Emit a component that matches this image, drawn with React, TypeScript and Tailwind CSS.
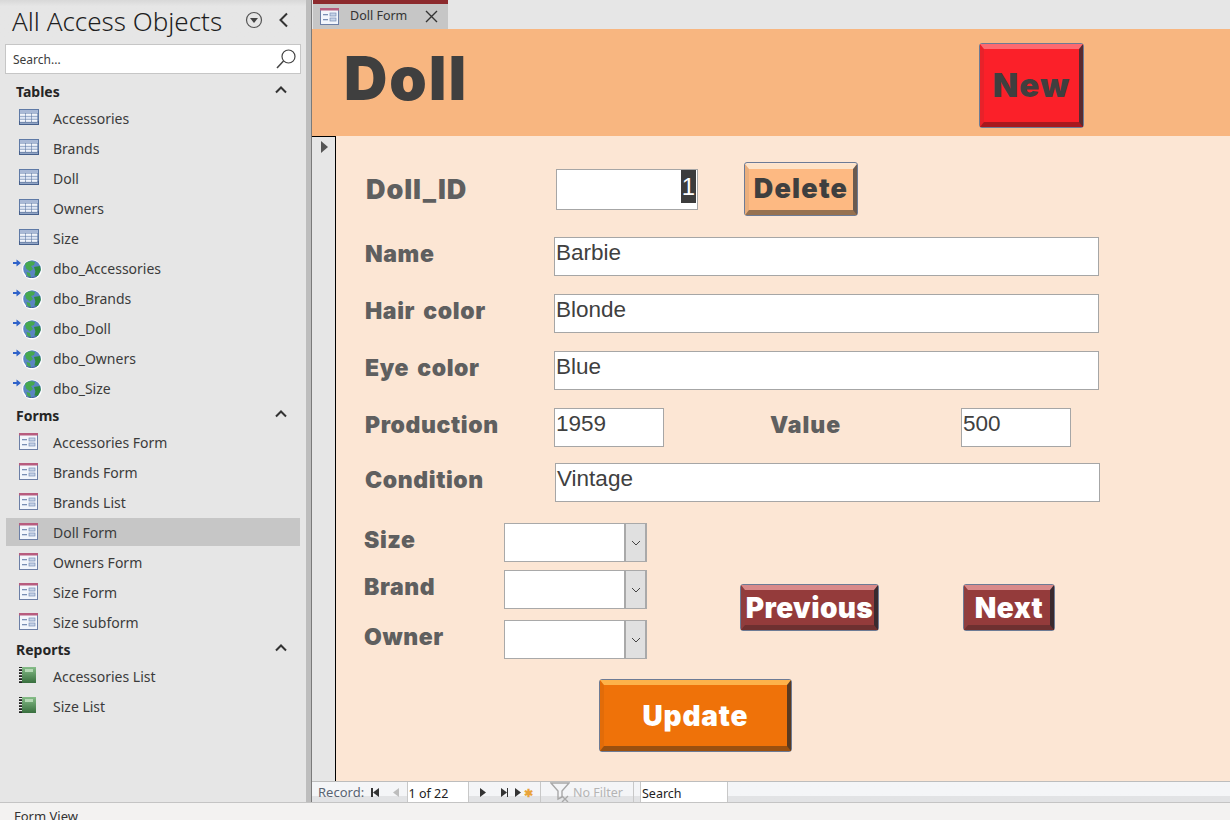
import React from "react";

const sans = "font-['Noto_Sans','Open_Sans',sans-serif]";
const arial = "font-['Liberation_Sans',Arial,sans-serif]";
const black = "font-['Inter','Liberation_Sans',sans-serif] font-black";

function TableIcon() {
  return (
    <svg width="20" height="16" viewBox="0 0 20 16" className="block">
      <rect x="0" y="0" width="20" height="16" fill="#5f7aa6" />
      <rect x="0" y="12" width="20" height="4" fill="#46608c" />
      <rect x="1" y="1" width="18" height="3" fill="#a9b9d6" />
      {[1, 7, 13].map((x) =>
        [4.5, 7.5, 10.5].map((y) => <rect key={`${x}-${y}`} x={x} y={y} width="5.4" height="2.4" fill={y === 7.5 ? "#dfe7f5" : "#f2f5fb"} />)
      )}
      <rect x="1" y="13.4" width="18" height="1.6" fill="#93a6c6" />
    </svg>
  );
}

function GlobeIcon() {
  return (
    <svg width="30" height="21" viewBox="0 0 30 21" className="block">
      <circle cx="19" cy="10.5" r="10" fill="#fff" />
      <circle cx="19" cy="10" r="8.8" fill="#5b86c2" />
      <path d="M12 5c2-3 6-3.4 10-2l-1 3-3 1 2 3-3 2.5-4-3z" fill="#46a84f" />
      <path d="M21 8l6-1 .8 4-3 6-3.4-.6 1-4z" fill="#2f8a3e" />
      <path d="M13.5 13l3.5 1 1 4.5-3.5-1.5z" fill="#46a84f" />
      <path d="M13 17c3 2 8 2 11 0" stroke="#3a5f98" strokeWidth="1" fill="none" />
      <path d="M0 3h3.5V.5L8 4 3.5 7.5V5H0z" fill="#2f62c9" />
    </svg>
  );
}

function FormIcon() {
  return (
    <svg width="19" height="17" viewBox="0 0 19 17" className="block">
      <rect x="0.5" y="0.5" width="18" height="16" fill="#f3f6fc" stroke="#6c7fa6" />
      <rect x="0" y="0" width="19" height="2.5" fill="#b85c7e" />
      <rect x="3" y="6" width="5" height="1.3" fill="#7a8fb5" />
      <rect x="10" y="5" width="6" height="3" fill="#c7d3e8" stroke="#7a8fb5" strokeWidth="0.7" />
      <rect x="3" y="11" width="5" height="1.3" fill="#7a8fb5" />
      <rect x="10" y="10" width="6" height="3" fill="#c7d3e8" stroke="#7a8fb5" strokeWidth="0.7" />
    </svg>
  );
}

function ReportIcon() {
  return (
    <svg width="17" height="16" viewBox="0 0 17 16" className="block">
      <defs>
        <linearGradient id="rp" x1="0" y1="0" x2="0" y2="1">
          <stop offset="0" stopColor="#86bd88" />
          <stop offset="1" stopColor="#386f3e" />
        </linearGradient>
      </defs>
      <rect x="2" y="0" width="15" height="16" fill="url(#rp)" />
      <rect x="6" y="2" width="8" height="3" fill="#b4d8b4" />
      <rect x="0" y="0" width="3" height="16" fill="#222" />
      {[1, 4, 7, 10, 13].map((y) => (
        <rect key={y} x="0" y={y} width="3" height="1.2" fill="#eee" />
      ))}
    </svg>
  );
}

function Caret() {
  return (
    <svg width="12" height="8" viewBox="0 0 12 8" className="block">
      <path d="M1 6.5L6 1.5l5 5" stroke="#333" strokeWidth="2" fill="none" />
    </svg>
  );
}

function Section({ title, mt }: { title: string; mt?: string }) {
  return (
    <div className={`flex items-center justify-between h-[24px] pl-[16px] pr-[19px] ${mt ?? ""}`}>
      <span className="text-[14px] font-bold text-[#252525]">{title}</span>
      <span className="-mt-[3px]"><Caret /></span>
    </div>
  );
}

function Item({ label, icon, selected }: { label: string; icon: React.ReactNode; selected?: boolean }) {
  return (
    <div className="relative flex items-center h-[30px] mx-[6px] pl-[47px]">
      {selected && <div className="absolute left-0 right-0 top-[1px] h-[28px] bg-[#c6c6c6]" />}
      <span className="absolute left-[13px] top-[6px]">{icon}</span>
      <span className="relative text-[14px] text-[#3b3b3b]">{label}</span>
    </div>
  );
}

function Sidebar() {
  const tables = ["Accessories", "Brands", "Doll", "Owners", "Size"];
  const links = ["dbo_Accessories", "dbo_Brands", "dbo_Doll", "dbo_Owners", "dbo_Size"];
  const forms = ["Accessories Form", "Brands Form", "Brands List", "Doll Form", "Owners Form", "Size Form", "Size subform"];
  const reports = ["Accessories List", "Size List"];
  return (
    <aside className={`w-[306px] shrink-0 bg-[#e6e6e6] flex flex-col ${sans}`}>
      <div className="flex items-center h-[44px] pl-[12px] pr-[17px] bg-gradient-to-b from-[#d8d8d8] from-0% to-[#e6e6e6] to-[14%]">
        <span className="text-[26px] leading-none text-[#1f1f1f] font-light flex-1 whitespace-nowrap -mt-[2px]">All Access Objects</span>
        <svg width="18" height="18" viewBox="0 0 18 18" className="mr-[15px] -mt-[5px]">
          <circle cx="9" cy="9" r="7.5" stroke="#555" strokeWidth="1.2" fill="none" />
          <path d="M5 7h8l-4 5z" fill="#444" />
        </svg>
        <svg width="11" height="16" viewBox="0 0 11 16" className="-mt-[5px]">
          <path d="M9 1.5L2.5 8 9 14.5" stroke="#333" strokeWidth="2" fill="none" />
        </svg>
      </div>
      <div className="flex items-center justify-between ml-[5px] w-[296px] h-[30px] bg-white border border-[#c6c6c6] pl-[7px] pr-[3px]">
        <span className="text-[12px] text-[#3b3b3b] mt-[1px]">Search...</span>
        <svg width="22" height="22" viewBox="0 0 22 22">
          <circle cx="13.5" cy="8.5" r="6.5" stroke="#444" strokeWidth="1.2" fill="none" />
          <path d="M8.5 13L2 20" stroke="#444" strokeWidth="1.5" />
        </svg>
      </div>
      <Section title="Tables" mt="mt-[5px]" />
      {tables.map((t) => <Item key={t} label={t} icon={<TableIcon />} />)}
      {links.map((t) => (
        <div key={t} className="relative flex items-center h-[30px] mx-[6px] pl-[47px]">
          <span className="absolute left-[7px] top-[6px]"><GlobeIcon /></span>
          <span className="text-[14px] text-[#3b3b3b]">{t}</span>
        </div>
      ))}
      <Section title="Forms" />
      {forms.map((t) => <Item key={t} label={t} icon={<FormIcon />} selected={t === "Doll Form"} />)}
      <Section title="Reports" />
      {reports.map((t) => <Item key={t} label={t} icon={<ReportIcon />} />)}
    </aside>
  );
}

function Bevel({
  children, tone, className,
}: { children: React.ReactNode; tone: "red" | "peach" | "maroon" | "orange"; className: string }) {
  const tones = {
    red: "bg-[#fb2029] border-t-[#fd6a70] border-r-[#5a2a2e] border-b-[#a8181e] border-l-[#e8222a] text-[#3f3f3f]",
    peach: "bg-[#fdb982] border-t-[#fee3c8] border-r-[#6a5a50] border-b-[#96714f] border-l-[#eaae7c] text-[#3f3f3f]",
    maroon: "bg-[#943b3b] border-t-[#d98a8a] border-r-[#3a2a2e] border-b-[#6e3030] border-l-[#8f3e3e] text-white",
    orange: "bg-[#ef7209] border-t-[#fdb24a] border-r-[#5a3a20] border-b-[#9a5010] border-l-[#e26c09] text-white",
  };
  return (
    <div className={`rounded-[3px] border border-[#6d7b95] ${className}`}>
      <div className={`h-full w-full flex items-center justify-center border-t-[5px] border-r-[4px] border-b-[5px] border-l-[4px] ${tones[tone]} ${black}`}>
        {children}
      </div>
    </div>
  );
}

function Label({ children, w, className = "" }: { children: React.ReactNode; w: string; className?: string }) {
  return (
    <span className={`${black} text-[23px] tracking-[0.6px] [word-spacing:3px] leading-[30px] text-[#5f5f5f] whitespace-nowrap -translate-y-[3px] ${w} ${className}`}>{children}</span>
  );
}

function Field({ value, w, className = "" }: { value?: string; w: string; className?: string }) {
  return (
    <div className={`h-[39px] bg-white border border-[#a6a6a6] pl-[1px] ${arial} text-[22.5px] leading-[29px] text-[#404040] ${w} ${className}`}>
      {value}
    </div>
  );
}

function Combo() {
  return (
    <div className="flex h-[39px] w-[143px] bg-white border-2 border-[#a9a9a9] border-y border-l">
      <div className="flex-1" />
      <div className="w-[21px] bg-[#e0e0e0] border-l-2 border-[#a9a9a9] flex items-center justify-center">
        <svg width="10" height="6" viewBox="0 0 10 6"><path d="M1 1l4 4 4-4" stroke="#444" strokeWidth="1" fill="none" /></svg>
      </div>
    </div>
  );
}

function Tri({ dir = "r", color = "#333" }: { dir?: "r" | "l"; color?: string }) {
  return (
    <svg width="6" height="9" viewBox="0 0 6 9" className="block">
      <path d={dir === "r" ? "M0 0l6 4.5L0 9z" : "M6 0L0 4.5 6 9z"} fill={color} />
    </svg>
  );
}

function RecordBar() {
  return (
    <div className="h-[21px] shrink-0 border-t border-[#bdbdbd] flex bg-gradient-to-b from-[#f4f5f7] from-70% to-[#e2e3e5] to-70%">
      <div className={`flex items-center w-[229px] border-r border-[#c8c8c8] ${sans}`}>
        <span className="ml-[6px] text-[13px] text-[#5a6472] w-[53px] mt-[2px]">Record:</span>
        <span className="w-[1.5px] h-[9px] bg-[#333]" />
        <Tri dir="l" />
        <span className="ml-[14px]"><Tri dir="l" color="#bdbdbd" /></span>
        <div className="ml-[8px] w-[62px] h-[20px] bg-white border-x border-[#c8c8c8] pl-[1px] text-[12.5px] leading-[23px] text-[#222]">1 of 22</div>
        <span className="ml-[11px]"><Tri /></span>
        <span className="ml-[15px]"><Tri /></span>
        <span className="w-[1.5px] h-[9px] bg-[#333]" />
        <span className="ml-[7px]"><Tri /></span>
        <span className="ml-[3px] text-[#e9a33a] text-[11px] leading-none font-bold">✱</span>
      </div>
      <div className={`flex items-center w-[93px] border-r border-[#c8c8c8] pl-[9px] ${sans}`}>
        <svg width="20" height="21" viewBox="0 0 20 21" className="shrink-0">
          <path d="M1 1h18l-7 8v6l-4 2V9z" stroke="#a8a8a8" strokeWidth="1.4" fill="none" />
          <path d="M12 14l6 6M18 14l-6 6" stroke="#a8a8a8" strokeWidth="1.4" />
        </svg>
        <span className="ml-[3px] text-[12.5px] text-[#b4b4b4] whitespace-nowrap mt-[2px]">No Filter</span>
      </div>
      <div className={`ml-[6px] w-[88px] h-[20px] bg-white border-x border-[#c8c8c8] pl-[1px] text-[12.5px] leading-[23px] text-[#222] ${sans}`}>Search</div>
    </div>
  );
}

export default function App() {
  return (
    <div className="w-[1230px] h-[820px] overflow-hidden flex flex-col bg-[#e6e6e6]">
      <div className="flex flex-1 min-h-0">
        <Sidebar />
        <div className="w-[5px] bg-[#bdbdbd] shrink-0" />
        <div className="w-[1px] bg-[#7a7a7a] shrink-0" />
        <main className="flex-1 min-w-0 flex flex-col">
          <div className={`h-[29px] shrink-0 bg-[#e6e6e6] ${sans}`}>
            <div className="w-[135px] h-full ml-[1px] bg-[#c6c6c6] border-t-[4px] border-[#8c2a2d] flex items-center pl-[7px]">
              <FormIcon />
              <span className="ml-[11px] text-[12.5px] text-[#333]">Doll Form</span>
              <svg width="13" height="13" viewBox="0 0 13 13" className="ml-[18px]">
                <path d="M1 1l11 11M12 1L1 12" stroke="#333" strokeWidth="1.4" />
              </svg>
            </div>
          </div>
          <header className="h-[107px] shrink-0 bg-[#f8b680] flex pl-[32px] pr-[146px] items-start justify-between">
            <h1 className={`${black} text-[60px] tracking-[2px] leading-none text-[#3f3f3f] mt-[19px]`}>Doll</h1>
            <Bevel tone="red" className="w-[105px] h-[85px] mt-[14px] text-[33px] tracking-[1.2px]">New</Bevel>
          </header>
          <div className="flex-1 min-h-0 flex">
            <div className="w-[24px] shrink-0 bg-[#e6e6e6] border-t border-r border-black pl-[9px] pt-[4px]">
              <svg width="7" height="12" viewBox="0 0 7 12"><path d="M0 0l7 6-7 6z" fill="#555" /></svg>
            </div>
            <div className="flex-1 bg-[#fce6d4] pl-[29px] pt-[26px]">
              <div className="flex items-center h-[54px]">
                <Label w="w-[190px]" className="ml-[1px] text-[27px] tracking-[0.9px] translate-y-[1px]">Doll_ID</Label>
                <div className={`relative h-[41px] w-[142px] bg-white border border-[#a6a6a6] ${arial}`}>
                  <span className="absolute right-[1px] top-0 h-[33px] w-[15px] bg-[#3c3c3c] text-white text-[24px] leading-[33px] text-center">1</span>
                </div>
                <Bevel tone="peach" className="w-[114px] h-[54px] ml-[46px] pt-[1px] text-[27px] tracking-[1.2px]">Delete</Bevel>
              </div>
              <div className="flex items-center mt-[21px]">
                <Label w="w-[189px]">Name</Label>
                <Field value="Barbie" w="w-[545px]" />
              </div>
              <div className="flex items-center mt-[18px]">
                <Label w="w-[189px]">Hair color</Label>
                <Field value="Blonde" w="w-[545px]" />
              </div>
              <div className="flex items-center mt-[18px]">
                <Label w="w-[189px]">Eye color</Label>
                <Field value="Blue" w="w-[545px]" />
              </div>
              <div className="flex items-center mt-[18px]">
                <Label w="w-[189px]">Production</Label>
                <Field value="1959" w="w-[110px]" />
                <Label w="w-[191px]" className="ml-[106px] tracking-[1px]">Value</Label>
                <Field value="500" w="w-[110px]" />
              </div>
              <div className="flex items-center mt-[16px]">
                <Label w="w-[190px]">Condition</Label>
                <Field value="Vintage" w="w-[545px]" />
              </div>
              <div className="flex mt-[21px] -ml-[1px]">
                <div className="flex flex-col w-[283px]">
                  <div className="flex items-center"><Label w="w-[140px]">Size</Label><Combo /></div>
                  <div className="flex items-center mt-[8px]"><Label w="w-[140px]">Brand</Label><Combo /></div>
                  <div className="flex items-center mt-[11px]"><Label w="w-[140px]">Owner</Label><Combo /></div>
                </div>
                <Bevel tone="maroon" className="w-[139px] h-[47px] ml-[93px] mt-[61px] text-[28px] tracking-[0.4px]">Previous</Bevel>
                <Bevel tone="maroon" className="w-[92px] h-[47px] ml-[84px] mt-[61px] text-[28px] tracking-[0.5px]">Next</Bevel>
              </div>
              <Bevel tone="orange" className="w-[193px] h-[73px] ml-[234px] mt-[20px] text-[28px] tracking-[0.8px]">Update</Bevel>
            </div>
          </div>
          <RecordBar />
        </main>
      </div>
      <footer className={`h-[18px] shrink-0 bg-[#f3f2f1] border-t border-[#c4c4c4] pl-[14px] text-[13px] leading-[26px] text-[#333] ${sans}`}>Form View</footer>
    </div>
  );
}
